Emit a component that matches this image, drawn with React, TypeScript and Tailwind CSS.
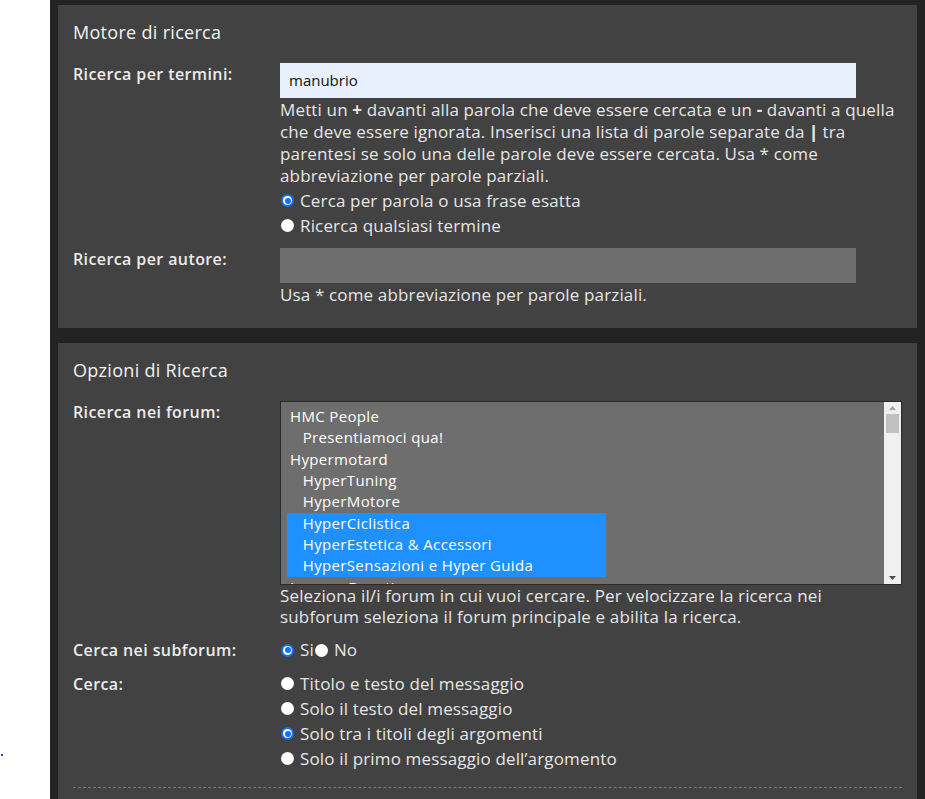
import React from 'react'

const forums: { name: string; indent?: boolean; selected?: boolean }[] = [
  { name: 'HMC People' },
  { name: 'Presentiamoci qua!', indent: true },
  { name: 'Hypermotard' },
  { name: 'HyperTuning', indent: true },
  { name: 'HyperMotore', indent: true },
  { name: 'HyperCiclistica', indent: true, selected: true },
  { name: 'HyperEstetica & Accessori', indent: true, selected: true },
  { name: 'HyperSensazioni e Hyper Guida', indent: true, selected: true },
  { name: 'Lounge Ducati' },
]

function Radio({ checked }: { checked?: boolean }) {
  if (checked) {
    return (
      <span className="flex size-[13px] shrink-0 items-center justify-center rounded-full bg-[#1071f0]">
        <span className="flex size-[9px] items-center justify-center rounded-full bg-white">
          <span className="size-[6px] rounded-full bg-[#1071f0]" />
        </span>
      </span>
    )
  }
  return <span className="size-[13px] shrink-0 rounded-full bg-white" />
}

function RadioRow({ label, checked }: { label: string; checked?: boolean }) {
  return (
    <div className="flex h-[25px] items-center gap-[6px] pl-[1px]">
      <Radio checked={checked} />
      <span>{label}</span>
    </div>
  )
}

function Row({ label, children }: { label: string; children: React.ReactNode }) {
  return (
    <div className="flex items-start">
      <div className="w-[207px] shrink-0 text-[16px] font-semibold leading-[22px] tracking-[0.4px] text-[#ececec]">
        {label}
      </div>
      <div className="w-[622px] min-w-0">{children}</div>
    </div>
  )
}

export default function App() {
  return (
    <div
      className="flex min-h-screen bg-white text-[17px] tracking-[0.15px] text-[#e6e6e6]"
      style={{ fontFamily: '"Open Sans", "Liberation Sans", sans-serif' }}
    >
      <div className="w-[50px] shrink-0">
        <div className="ml-[1px] mt-[754px] size-[2px] bg-[#3b3bd0]" />
      </div>
      <div className="flex flex-1 flex-col gap-[15px] bg-[#232323] px-2 pt-[5px]">
        <section className="bg-[#424242] px-[15px] pb-[22px] pt-[16px]">
          <h3 className="m-0 text-[18px] font-medium leading-[22px] tracking-[0.3px] text-[#f2f2f2]">
            Motore di ricerca
          </h3>
          <div className="mt-[20px] flex flex-col gap-[10px]">
            <Row label="Ricerca per termini:">
              <div className="flex h-[35px] w-[576px] items-center bg-[#e8f0fe] px-[9px] text-[15px] tracking-normal text-[#111]">
                manubrio
              </div>
              <p className="m-0 mt-[1px] leading-[22px]">
                Metti un <b className="font-bold">+</b> davanti alla parola che deve essere cercata e un{' '}
                <b className="font-bold">-</b> davanti a quella che deve essere ignorata. Inserisci una lista di parole
                separate da <b className="font-extrabold">|</b> tra parentesi se solo una delle parole deve essere
                cercata. Usa * come abbreviazione per parole parziali.
              </p>
              <div className="mt-[1px]">
                <RadioRow label="Cerca per parola o usa frase esatta" checked />
                <RadioRow label="Ricerca qualsiasi termine" />
              </div>
            </Row>
            <Row label="Ricerca per autore:">
              <div className="h-[35px] w-[576px] bg-[#6e6e6e]" />
              <p className="m-0 mt-[1px] leading-[22px]">Usa * come abbreviazione per parole parziali.</p>
            </Row>
          </div>
        </section>

        <section className="flex-1 bg-[#424242] px-[15px] pt-[16px]">
          <h3 className="m-0 text-[18px] font-medium leading-[22px] tracking-[0.3px] text-[#f2f2f2]">
            Opzioni di Ricerca
          </h3>
          <div className="mt-[20px] flex flex-col gap-[12px]">
            <Row label="Ricerca nei forum:">
              <div className="flex h-[184px] border border-[#2a2a2a] bg-[#6e6e6e]">
                <div className="flex-1 overflow-hidden pl-[6px] pt-[4px] text-[15px] tracking-[0.35px] text-white">
                  {forums.map((f) => (
                    <div
                      key={f.name}
                      className={
                        'h-[21.33px] w-[319px] whitespace-pre pl-[3px] leading-[21px] ' +
                        (f.selected ? 'bg-[#1e90ff]' : '')
                      }
                    >
                      {(f.indent ? '   ' : '') + f.name}
                    </div>
                  ))}
                </div>
                <div className="flex w-[17px] flex-col items-center justify-between bg-[#f0f0f0] py-[4px]">
                  <div className="flex flex-col items-center gap-[4px]">
                    <svg width="7" height="4" viewBox="0 0 7 4">
                      <path d="M0 4 L3.5 0 L7 4 Z" fill="#a3a3a3" />
                    </svg>
                    <div className="h-[19px] w-[13px] bg-[#c1c1c1]" />
                  </div>
                  <svg width="7" height="4" viewBox="0 0 7 4">
                    <path d="M0 0 L3.5 4 L7 0 Z" fill="#505050" />
                  </svg>
                </div>
              </div>
              <p className="m-0 leading-[21px]">
                Seleziona il/i forum in cui vuoi cercare. Per velocizzare la ricerca nei subforum seleziona il forum
                principale e abilita la ricerca.
              </p>
            </Row>
            <Row label="Cerca nei subforum:">
              <div className="flex h-[22px] items-center pl-[1px]">
                <Radio checked />
                <span className="ml-[6px]">Si</span>
                <span className="ml-[1px] flex">
                  <Radio />
                </span>
                <span className="ml-[6px]">No</span>
              </div>
            </Row>
            <Row label="Cerca:">
              <div className="-mt-[2px]">
                <RadioRow label="Titolo e testo del messaggio" />
                <RadioRow label="Solo il testo del messaggio" />
                <RadioRow label="Solo tra i titoli degli argomenti" checked />
                <RadioRow label="Solo il primo messaggio dell’argomento" />
              </div>
            </Row>
          </div>
          <div className="mt-[16px] border-t border-dashed border-[#777]" />
          <div className="h-[20px]" />
        </section>
      </div>
    </div>
  )
}
